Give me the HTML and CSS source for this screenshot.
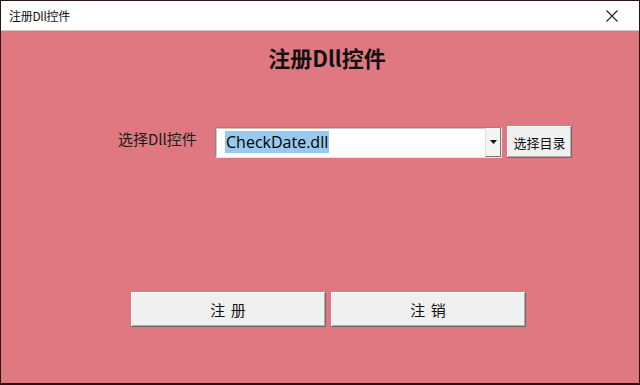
FILE: index.html
```html
<!DOCTYPE html>
<html lang="zh">
<head>
<meta charset="utf-8">
<title>注册Dll控件</title>
<link rel="stylesheet" href="styles.css">
</head>
<body>
<div class="window">
  <div class="titlebar">
    <span class="title">注册Dll控件</span>
    <svg class="close" width="12" height="12" viewBox="0 0 12 12"><path d="M0.5 0.5 L11.5 11.5 M11.5 0.5 L0.5 11.5" stroke="#222" stroke-width="1.1" fill="none"/></svg>
  </div>
  <div class="content">
    <h1 class="heading">注册Dll控件</h1>
    <div class="row">
      <div class="label">选择Dll控件</div>
      <div class="combo">
        <span class="value"><span class="sel">CheckDate.dll</span></span>
        <span class="arrow"><svg width="7" height="4" viewBox="0 0 7 4"><path d="M0 0 H7 L3.5 4 Z" fill="#111"/></svg></span>
      </div>
      <button class="btn small">选择目录</button>
    </div>
    <div class="actions">
      <button class="btn big">注 册</button>
      <button class="btn big">注 销</button>
    </div>
  </div>
</div>
</body>
</html>
```
FILE: styles.css
```css
* { box-sizing: border-box; }
html, body { margin: 0; padding: 0; }
body { width: 640px; height: 385px; overflow: hidden; background: #fff; font-family: "Noto Sans CJK SC", "Noto Sans", sans-serif; }
.window {
  width: 640px; height: 385px;
  border: 1px solid #2a1214;
  border-bottom-width: 2px;
  display: flex; flex-direction: column;
}
.titlebar {
  height: 30px; background: #fff;
  display: flex; align-items: center; justify-content: space-between;
  padding: 0 21px 0 8px;
  border-bottom: 1px solid #d9c5c7;
}
.title { font-size: 12px; color: #111; letter-spacing: -0.3px; }
.content {
  flex: 1; background: #df7881;
  display: flex; flex-direction: column; align-items: flex-start;
}
.heading {
  margin: 12px 0 0 0; align-self: center; padding-left: 14px;
  font-size: 22px; line-height: 29px; font-weight: 700; color: #111;
}
.row {
  margin: 54px 0 0 117px;
  display: flex; align-items: flex-start; height: 32px;
}
.label { width: 97px; font-size: 15px; color: #1a1a1a; padding-top: 2px; line-height: 21px; }
.combo {
  width: 287px; height: 31px; margin-top: 1px;
  background: #fff;
  border: 1px solid #8a8a8a; border-right-color: #e8e8e8; border-bottom-color: #e8e8e8;
  box-shadow: inset 1px 1px 0 #c8c8c8;
  display: flex; align-items: center; justify-content: space-between;
  padding-left: 9px;
}
.value { font-family: "Open Sans", "Noto Sans", sans-serif; font-size: 16px; line-height: 21px; color: #000; }
.sel { background: #99c9ef; padding: 0 1px; }
.arrow {
  width: 16px; height: 29px; background: #f4f4f4;
  border-left: 1px solid #e0e0e0; border-right: 1px solid #777; border-bottom: 1px solid #777;
  display: flex; align-items: center; justify-content: center;
}
.btn {
  font-family: "Noto Sans CJK SC", "Noto Sans", sans-serif;
  background: #f0f0f0; color: #111;
  border: none;
  box-shadow: inset -1px -1px 0 #6b6b6b, inset 1px 1px 0 #fff, inset -2px -2px 0 #b0b0b0;
  padding: 0; margin: 0;
}
.small { width: 65px; height: 32px; margin-left: 5px; font-size: 13px; }
.actions { margin: 134px 0 0 130px; display: flex; gap: 5px; }
.big { width: 195px; height: 35px; font-size: 15px; letter-spacing: 1px; }
```
